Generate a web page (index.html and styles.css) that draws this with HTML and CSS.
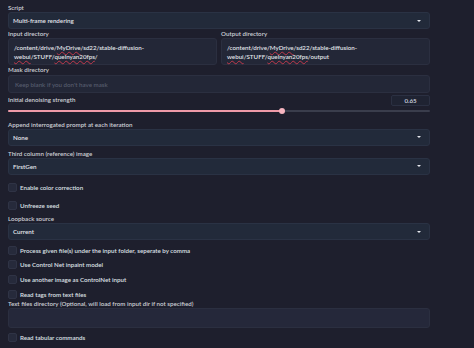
FILE: index.html
```html
<!DOCTYPE html>
<html>
<head>
<meta charset="utf-8">
<link rel="stylesheet" href="styles.css">
</head>
<body>
<div class="panel">
  <div class="label l-script">Script</div>
  <div class="dropdown"><span>Multi-frame rendering</span><i class="caret"></i></div>

  <div class="two-col">
    <div class="col">
      <div class="label">Input directory</div>
      <div class="textbox tall">
        <div>/content/drive/<span class="sp">MyDrive</span>/sd22/stable-diffusion-</div>
        <div><span class="sp">webui</span>/STUFF/<span class="sp">quelnyan20fps</span>/</div>
      </div>
    </div>
    <div class="col">
      <div class="label">Output directory</div>
      <div class="textbox tall">
        <div>/content/drive/<span class="sp">MyDrive</span>/sd22/stable-diffusion-</div>
        <div><span class="sp">webui</span>/STUFF/<span class="sp">quelnyan20fps</span>/output</div>
      </div>
    </div>
  </div>

  <div class="label">Mask directory</div>
  <div class="textbox single"><span class="placeholder">Keep blank if you don't have mask</span></div>

  <div class="slider-head">
    <div class="label">Initial denoising strength</div>
    <div class="number">0.65</div>
  </div>
  <div class="slider">
    <div class="track"><div class="fill" style="width: 65%"></div></div>
    <div class="thumb" style="left: 65%"></div>
  </div>

  <div class="label l-append">Append interrogated prompt at each iteration</div>
  <div class="dropdown"><span>None</span><i class="caret"></i></div>

  <div class="label l-third">Third column (reference) image</div>
  <div class="dropdown"><span>FirstGen</span><i class="caret"></i></div>

  <div class="check c-color"><i class="box"></i><span>Enable color correction</span></div>
  <div class="check c-seed"><i class="box"></i><span>Unfreeze seed</span></div>

  <div class="label l-loop">Loopback source</div>
  <div class="dropdown"><span>Current</span><i class="caret"></i></div>

  <div class="check c-first"><i class="box"></i><span>Process given file(s) under the input folder, seperate by comma</span></div>
  <div class="check c-next"><i class="box"></i><span>Use Control Net inpaint model</span></div>
  <div class="check c-next"><i class="box"></i><span>Use another image as ControlNet input</span></div>
  <div class="check c-next"><i class="box"></i><span>Read tags from text files</span></div>

  <div class="label">Text files directory (Optional, will load from input dir if not specified)</div>
  <div class="textbox area"></div>

  <div class="check c-last"><i class="box"></i><span>Read tabular commands</span></div>
</div>
</body>
</html>
```

FILE: styles.css
```css
* { box-sizing: border-box; }
html, body {
  margin: 0;
  background: #1e1f2d;
}
body {
  width: 474px;
  height: 348px;
  overflow: hidden;
  font-family: "Lato", "Noto Sans", sans-serif;
  font-size: 6.2px;
  font-weight: 600;
  color: #d5d8de;
}
.panel {
  width: 422px;
  margin-left: 8px;
  display: flex;
  flex-direction: column;
}
.label {
  height: 9px;
  line-height: 9px;
  color: #cdd0d7;
  white-space: nowrap;
}
.l-script { margin-top: 3px; }
.dropdown {
  height: 17px;
  background: #222a3a;
  border: 1px solid #2a3244;
  border-radius: 3px;
  display: flex;
  align-items: center;
  justify-content: space-between;
  padding: 0 8px 0 4px;
  color: #e2e5ea;
}
.caret {
  width: 0;
  height: 0;
  border-left: 2px solid transparent;
  border-right: 2px solid transparent;
  border-top: 2px solid #e6e8ee;
}
.two-col {
  display: grid;
  grid-template-columns: 209px 209px;
  column-gap: 4px;
}
.textbox {
  background: #232737;
  border: 1px solid #2b2f40;
  border-radius: 3px;
  color: #e2e5ea;
}
.tall {
  height: 27px;
  padding: 4px 5px;
  line-height: 9px;
}
.single {
  height: 18px;
  padding: 0 6px;
  display: flex;
  align-items: center;
  margin-top: 1px;
  margin-bottom: 2px;
}
.placeholder { color: #555b6c; }
.sp {
  text-decoration: underline wavy #c0394b;
  text-decoration-thickness: 1px;
  text-underline-offset: 1px;
}
.slider-head {
  display: flex;
  justify-content: space-between;
  align-items: flex-start;
  height: 11px;
}
.number {
  width: 39px;
  height: 11px;
  background: #1f2332;
  border: 1px solid #2b3042;
  border-radius: 2px;
  display: flex;
  align-items: center;
  justify-content: center;
  color: #d8dbe2;
}
.slider {
  position: relative;
  height: 7px;
  margin-top: 1px;
  display: flex;
  align-items: center;
}
.track {
  width: 100%;
  height: 2px;
  background: #3a3d4c;
  border-radius: 1px;
}
.fill {
  height: 100%;
  background: #ef9aa8;
  border-radius: 1px;
}
.thumb {
  position: absolute;
  top: 50%;
  width: 6px;
  height: 6px;
  margin: -3px 0 0 -3px;
  border-radius: 50%;
  background: #f6b5c0;
}
.l-append { margin-top: 5.5px; }
.l-third { margin-top: 3px; }
.l-loop { margin-top: 4px; }
.check {
  height: 9px;
  display: flex;
  align-items: center;
  gap: 3px;
  white-space: nowrap;
  color: #dde0e6;
}
.box {
  width: 9px;
  height: 9px;
  background: #262a3b;
  border: 1px solid #2f3345;
  border-radius: 2px;
  flex: none;
}
.c-color { margin-top: 8.5px; }
.c-seed { margin-top: 9px; }
.c-first { margin-top: 5.5px; }
.c-next { margin-top: 5.9px; }
.area {
  height: 20px;
  background: #25283a;
}
.c-last { margin-top: 4.5px; }
```
